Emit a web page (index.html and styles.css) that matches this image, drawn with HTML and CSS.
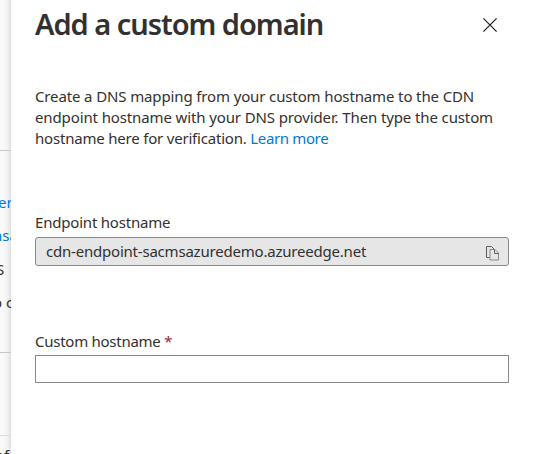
FILE: index.html
```html
<!DOCTYPE html>
<html lang="en">
<head>
<meta charset="utf-8">
<title>Add a custom domain</title>
<link rel="stylesheet" href="styles.css">
</head>
<body>
<div class="shell">
  <div class="backdrop">
    <section class="block block-top"></section>
    <section class="block block-details">
      <div class="row row-link row-first">er</div>
      <div class="row row-link row-second">nsa</div>
      <div class="row row-third">S</div>
      <div class="row row-fourth">o c</div>
    </section>
    <section class="block block-empty"></section>
    <section class="block-last"><div class="row row-last">of</div></section>
  </div>
  <main class="panel">
    <header class="head">
      <h1>Add a custom domain</h1>
      <svg class="close" width="14" height="14" viewBox="0 0 14 14"><path d="M.4.4l13.2 13.2M13.6.4L.4 13.6" fill="none" stroke="#1b1a19" stroke-width="1.15"/></svg>
    </header>
    <p class="intro">
      <span class="line line-a">Create a DNS mapping from your custom hostname to the CDN</span>
      <span class="line line-b">endpoint hostname with your DNS provider. Then type the custom</span>
      <span class="line line-c">hostname here for verification. <a class="link">Learn more</a></span>
    </p>
    <div class="field">
      <div class="label label-endpoint">Endpoint hostname</div>
      <div class="readonly">
        <span class="value">cdn-endpoint-sacmsazuredemo.azureedge.net</span>
        <svg class="copy" width="14" height="15" viewBox="0 0 14 15" fill="none" stroke-width="1"><path d="M3.500 11.500h-3v-11h5l3 3" stroke="#605e5c"/><path d="M4 3.500h5l3.500 3.500v7h-8.500z" fill="#e6e6e6" stroke="#8a8886"/><path d="M8.500 3.500v4h4" stroke="#605e5c"/></svg>
      </div>
    </div>
    <div class="field field-custom">
      <div class="label label-custom">Custom hostname <span class="required">*</span></div>
      <div class="input"></div>
    </div>
  </main>
</div>
</body>
</html>
```
FILE: styles.css
```css
* { box-sizing: border-box; }
body {
  margin: 0;
  background: #fff;
  color: #323130;
  font: 15px/21px "Noto Sans", "Open Sans", sans-serif;
}
.shell { display: flex; height: 454px; overflow: hidden; }
.backdrop {
  width: 11px;
  height: 454px;
  flex: none;
  overflow: hidden;
  background: linear-gradient(90deg, #fafafa 0, #f8f8f8 40%, #efefef 75%, #dedede 100%);
}
.block { border-bottom: 1px solid #c8c8c8; }
.block-top { height: 151px; }
.block-details { height: 202px; padding-top: 41px; }
.block-empty { height: 83px; border-color: #dcdcdc; }
.block-last { padding-top: 9px; }
.row { height: 21px; margin-bottom: 12px; white-space: nowrap; }
.row-link { color: #0078d4; }
.row-first { margin-left: -2px; }
.row-second { margin-left: -7px; margin-bottom: 13px; }
.row-third { margin-left: -4px; }
.row-fourth { margin-left: -7px; }
.row-last { margin-left: -5px; }
.panel { flex: 1; padding: 0 24px; background: #fff; }
.head { display: flex; justify-content: space-between; height: 86px; }
h1 {
  margin: 4px 0 0;
  font-size: 29px;
  line-height: 40px;
  font-weight: 600;
  letter-spacing: -1.03px;
  white-space: nowrap;
}
.close { margin: 18px 12px 0 0; }
.intro { margin: 0; height: 126px; }
.line { display: block; white-space: nowrap; }
.line-a { letter-spacing: -0.13px; }
.line-b { letter-spacing: -0.12px; }
.line-c { letter-spacing: -0.2px; }
.link { color: #0078d4; letter-spacing: -0.36px; }
.label { height: 21px; white-space: nowrap; }
.label-endpoint { letter-spacing: -0.2px; }
.label-custom { letter-spacing: -0.26px; }
.readonly {
  display: flex;
  justify-content: space-between;
  width: 474px;
  height: 29px;
  margin-top: 4px;
  padding: 3px 8px 0 10px;
  border: 1px solid #8a8886;
  border-radius: 3px;
  background: #e6e6e6;
}
.value { letter-spacing: -0.21px; }
.copy { margin-top: 5px; }
.field-custom { margin-top: 65px; }
.required { color: #a4262c; }
.input {
  width: 474px;
  height: 28px;
  margin-top: 3px;
  border: 1px solid #8a8886;
  background: #fff;
}
```
